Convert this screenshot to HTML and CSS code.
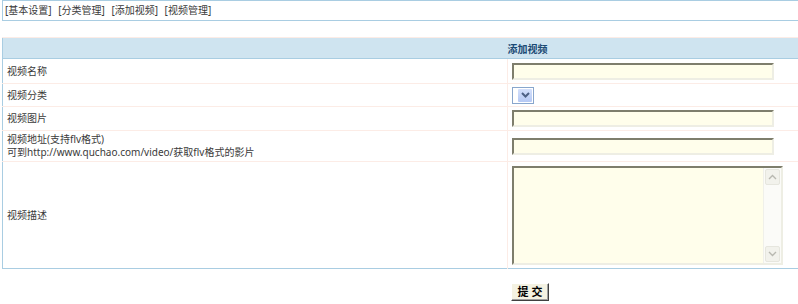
FILE: index.html
```html
<!DOCTYPE html>
<html lang="zh-CN">

<head>
  <meta charset="UTF-8" />
  <title>添加视频</title>
  <link rel="stylesheet" href="styles.css">
</head>

<body>
  <div class="nav">
    <a href="#">[基本设置]</a>
    <a href="#">[分类管理]</a>
    <a href="#">[添加视频]</a>
    <a href="#">[视频管理]</a>
  </div>

  <form class="form">
    <table class="grid">
      <tr class="head">
        <th></th>
        <th>添加视频</th>
      </tr>
      <tr class="row-name">
        <td class="label">视频名称</td>
        <td><input class="text" type="text"></td>
      </tr>
      <tr class="row-sort">
        <td class="label">视频分类</td>
        <td>
          <span class="select">
            <span class="select-value"></span>
            <span class="select-btn">
              <svg width="9" height="6" viewBox="0 0 9 6"><path d="M1 1 L4.5 4.5 L8 1" fill="none" stroke="#4d6185" stroke-width="2"/></svg>
            </span>
          </span>
        </td>
      </tr>
      <tr class="row-pic">
        <td class="label">视频图片</td>
        <td><input class="text" type="text"></td>
      </tr>
      <tr class="row-url">
        <td class="label">视频地址(支持flv格式)<br>可到http://www.quchao.com/video/获取flv格式的影片</td>
        <td><input class="text" type="text"></td>
      </tr>
      <tr class="row-desc">
        <td class="label">视频描述</td>
        <td>
          <div class="memo">
            <textarea></textarea>
            <div class="scroll">
              <span class="scroll-btn">
                <svg width="9" height="6" viewBox="0 0 9 6"><path d="M1 5 L4.5 1.5 L8 5" fill="none" stroke="#b8b8b0" stroke-width="1.4"/></svg>
              </span>
              <span class="scroll-btn">
                <svg width="9" height="6" viewBox="0 0 9 6"><path d="M1 1 L4.5 4.5 L8 1" fill="none" stroke="#b8b8b0" stroke-width="1.4"/></svg>
              </span>
            </div>
          </div>
        </td>
      </tr>
    </table>

    <div class="actions">
      <button type="button" class="submit">提 交</button>
    </div>
  </form>
</body>

</html>
```

FILE: styles.css
```css
html,
body {
  overflow: hidden;
}

body {
  margin: 0 0 0 2px;
  width: 1100px;
  font-family: "Noto Sans", "Noto Sans CJK SC", sans-serif;
  font-size: 10px;
  color: #3a3a3a;
  background: #fff;
}

.nav {
  height: 19px;
  line-height: 19px;
  border: 1px solid #a9cde2;
  padding-left: 2px;
}

.nav a {
  color: #3a3a3a;
  text-decoration: none;
  margin-right: 4px;
}

.form {
  margin-top: 16px;
}

.grid {
  width: 100%;
  border-collapse: collapse;
  border: 1px solid #a9cde2;
}

.grid td,
.grid th {
  padding: 0 0 0 4px;
  border-top: 1px solid #fcece6;
  text-align: left;
  vertical-align: middle;
}

.grid td.label {
  width: 500px;
  border-right: 1px solid #fcece6;
  line-height: 13px;
}

.head th {
  height: 20px;
  background: #cfe4f0;
  border-bottom: 1px solid #a9cde2;
  color: #1b4a74;
  font-weight: bold;
  padding-left: 0;
}

.row-name td {
  height: 24px;
}

.row-sort td {
  height: 22px;
}

.row-pic td {
  height: 23px;
}

.row-url td {
  height: 30px;
}

.row-desc td {
  height: 106px;
}

.text {
  box-sizing: border-box;
  display: block;
  width: 262px;
  height: 17px;
  margin: 0;
  padding: 0 2px;
  border: 2px solid;
  border-color: #7e7e6c #eeeee4 #eeeee4 #7e7e6c;
  background: #fffeeb;
  font: inherit;
}

.select {
  box-sizing: border-box;
  display: flex;
  align-items: center;
  width: 22px;
  height: 17px;
  border: 1px solid #89a6cc;
  background: #fff;
  padding: 1px;
}

.select-value {
  flex: 1;
}

.select-btn {
  display: flex;
  align-items: center;
  justify-content: center;
  width: 14px;
  height: 13px;
  background: linear-gradient(#d4e0fb, #b6c9f4);
  border-radius: 1px;
}

.memo {
  box-sizing: border-box;
  display: flex;
  width: 271px;
  height: 99px;
  border: 2px solid;
  border-color: #7e7e6c #eeeee4 #eeeee4 #7e7e6c;
  background: #fffeeb;
}

.memo textarea {
  flex: 1;
  border: 0;
  margin: 0;
  padding: 2px;
  background: transparent;
  resize: none;
  outline: none;
  font: inherit;
}

.scroll {
  display: flex;
  flex-direction: column;
  justify-content: space-between;
  width: 15px;
  padding: 1px;
  background: #fbfbf8;
  border-left: 1px solid #f0f0ea;
}

.scroll-btn {
  display: flex;
  align-items: center;
  justify-content: center;
  height: 14px;
  border: 1px solid #e6e6de;
  border-radius: 2px;
  background: #f2f2ec;
}

.actions {
  padding: 14px 0 0 509px;
}

.submit {
  box-sizing: border-box;
  width: 38px;
  height: 18px;
  margin: 0;
  padding: 0;
  border: 1px solid;
  border-color: #fff #404040 #404040 #fff;
  box-shadow: inset -1px -1px 0 #a0a0a0;
  background: #f4f2e2;
  color: #000;
  font-family: "Noto Sans", "Noto Sans CJK SC", sans-serif;
  font-size: 11px;
  font-weight: bold;
  line-height: 14px;
}
```
